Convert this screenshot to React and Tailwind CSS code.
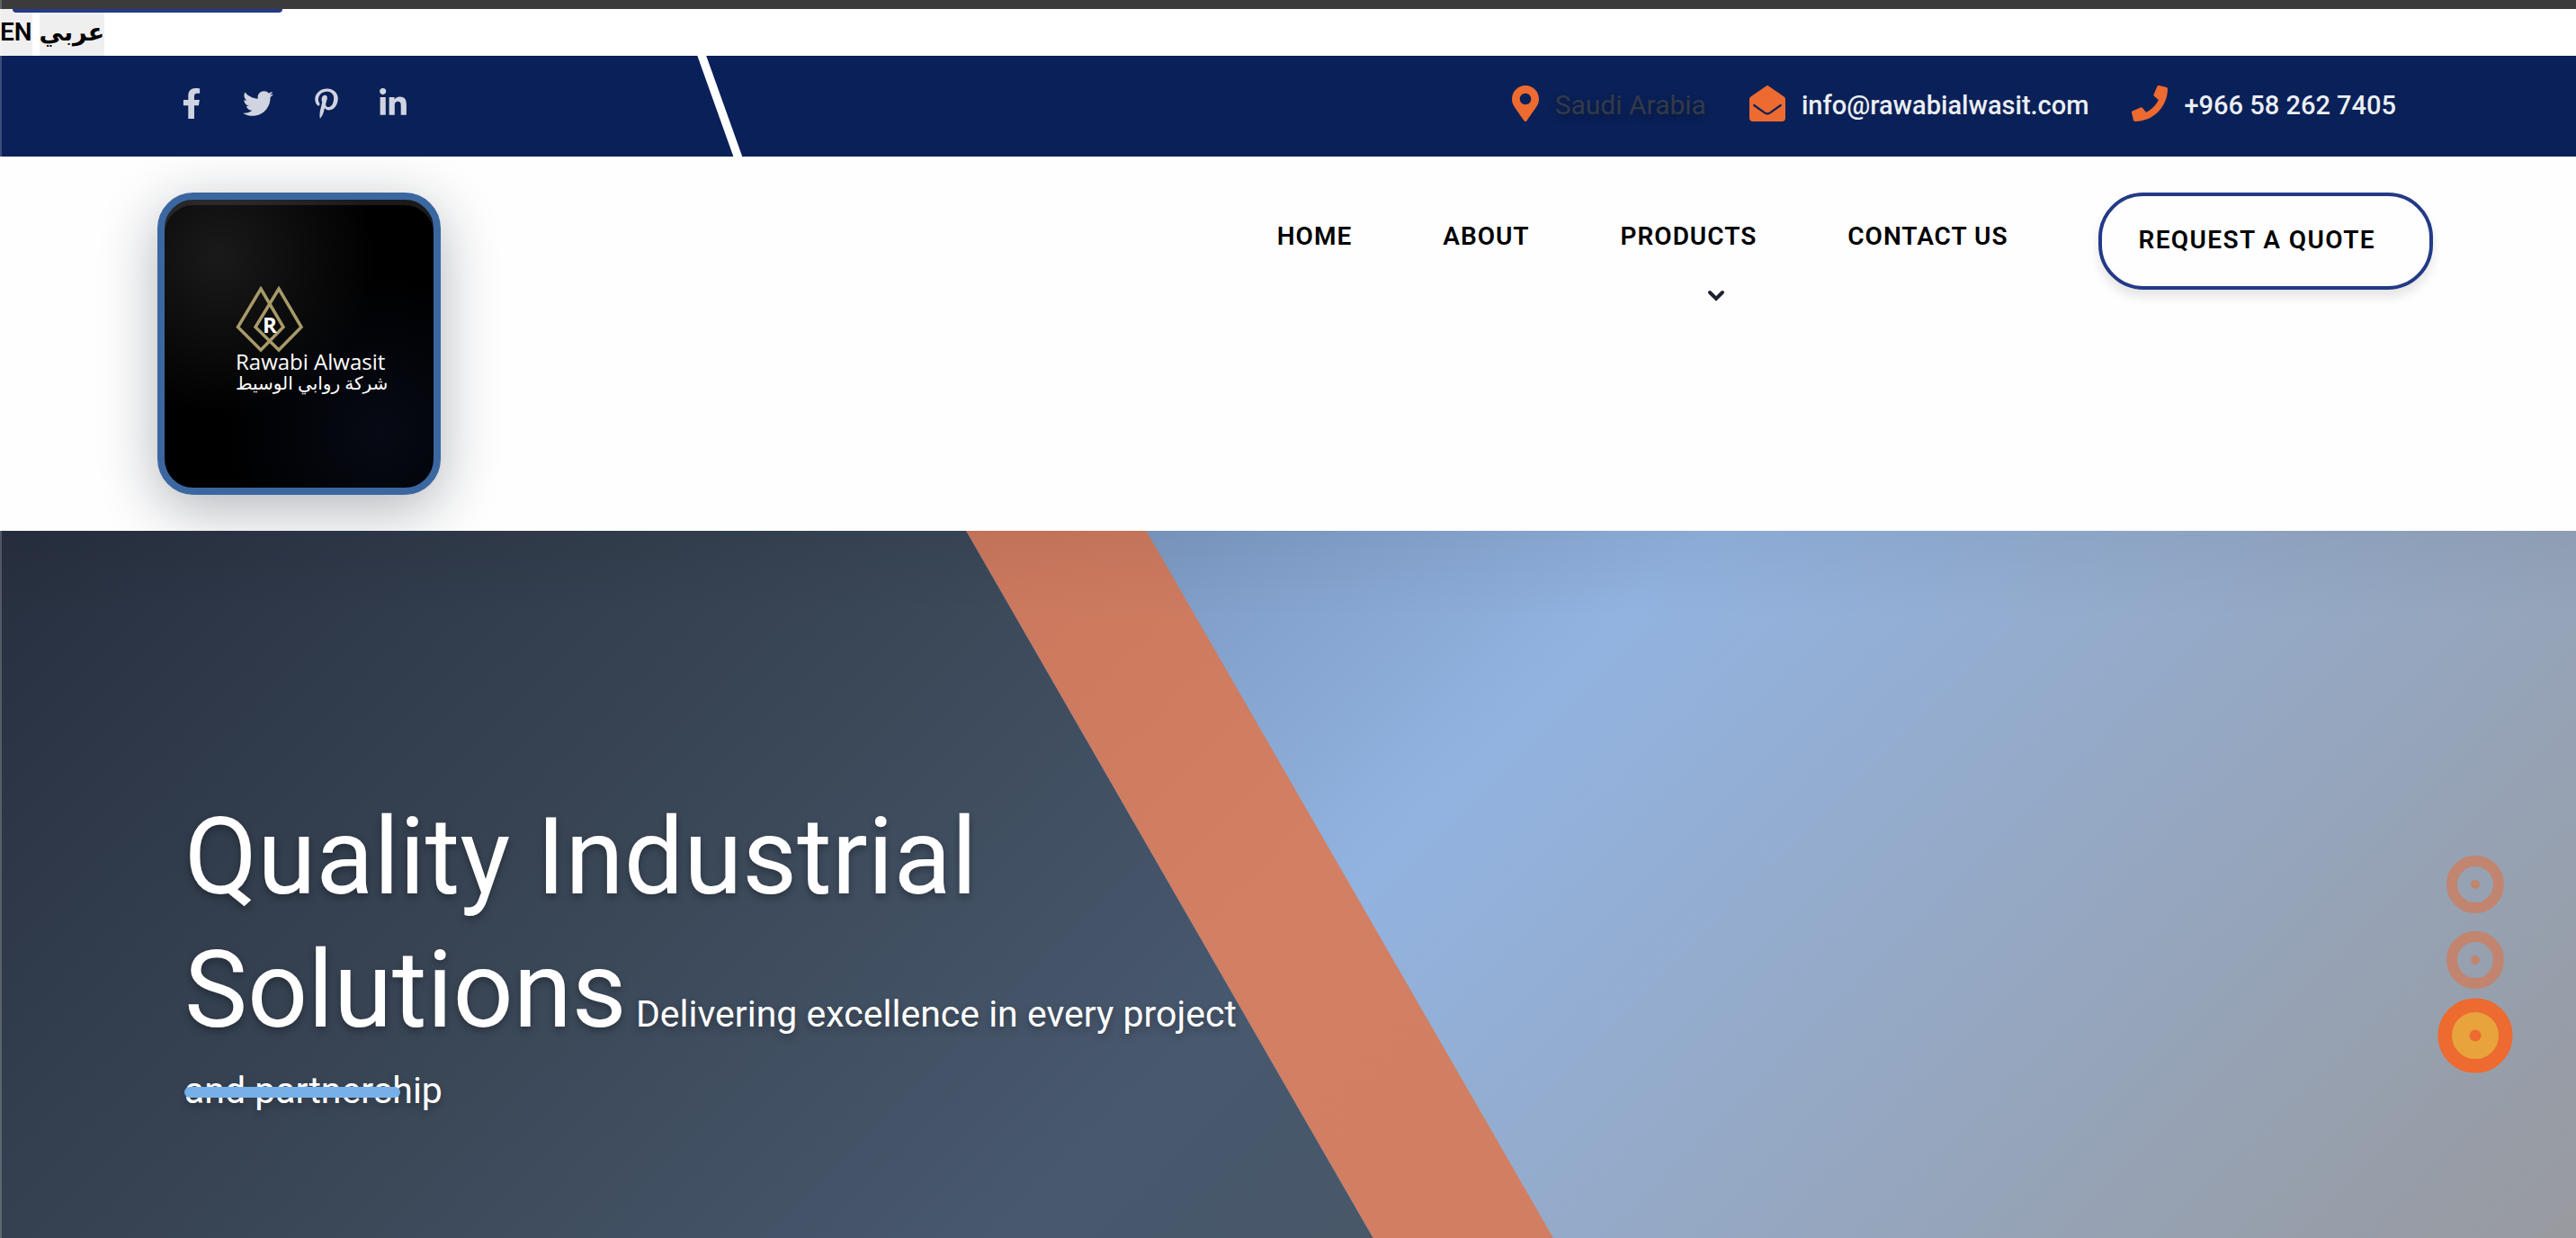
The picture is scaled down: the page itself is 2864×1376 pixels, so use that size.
import React from "react";
import {
  FaFacebookF,
  FaTwitter,
  FaPinterestP,
  FaLinkedinIn,
  FaMapMarkerAlt,
  FaPhone,
} from "react-icons/fa";

const socials = [
  { label: "Facebook", Icon: FaFacebookF, size: "h-[34px] w-[22px]" },
  { label: "Twitter", Icon: FaTwitter, size: "h-[34px] w-[34px]" },
  { label: "Pinterest", Icon: FaPinterestP, size: "h-[34px] w-[26px]" },
  { label: "LinkedIn", Icon: FaLinkedinIn, size: "h-[34px] w-[30px]" },
];

function LanguageBar() {
  return (
    <div className="flex h-[52px] gap-2 bg-white text-[28px] text-black">
      <button type="button" className="bg-[#efefef] font-semibold">EN</button>
      <button type="button" lang="ar" className="bg-[#efefef] text-[27px] font-bold">عربي</button>
    </div>
  );
}

function EnvelopeIcon() {
  return (
    <svg viewBox="0 0 40 40" className="size-10" aria-hidden="true">
      <path
        d="M18.500 0.700 Q20 -0.500 21.500 0.700 L38.600 12.600 Q40 13.800 40 15.500 V36 Q40 40 36 40 H4 Q0 40 0 36 V15.500 Q0 13.800 1.400 12.600 Z"
        fill="#ed6a30"
      />
      <path
        d="M5.200 22 L17 30.300 Q20 32.300 23 30.300 L34.800 22"
        fill="none"
        stroke="#0a2058"
        strokeWidth="2.200"
        strokeLinecap="round"
      />
    </svg>
  );
}

function TopBar() {
  return (
    <div className="relative z-10 flex h-28 items-center justify-between bg-[#0a2058] pr-[200px] pb-1.5 pl-[202px]">
      <div className="absolute inset-y-0 left-[27%] w-[52px] bg-white [clip-path:polygon(4%_0,23%_0,100%_100%,81%_100%)]" />
      <ul className="flex items-center gap-[46px] text-[#d0d4e0]">
        {socials.map(({ label, Icon, size }) => (
          <li key={label}>
            <a href="#" aria-label={label} className="block">
              <Icon className={size} />
            </a>
          </li>
        ))}
      </ul>
      <ul className="flex items-center gap-12 text-[29px] leading-10 text-[#ebeef2]">
        <li className="flex items-center gap-[18px] text-[#333a48]">
          <FaMapMarkerAlt className="h-10 w-[30px] text-[#ed6a30]" />
          <span className="pt-1 text-[30px] [text-shadow:0_4px_8px_rgba(0,0,0,0.3)]">Saudi Arabia</span>
        </li>
        <li className="flex items-center gap-[18px]">
          <EnvelopeIcon />
          <a href="mailto:info@rawabialwasit.com" className="pt-1 font-medium">info@rawabialwasit.com</a>
        </li>
        <li className="flex items-center gap-[18px]">
          <FaPhone className="size-10 text-[#ed6a30]" />
          <a href="tel:+966582627405" className="pt-1 font-medium">+966 58 262 7405</a>
        </li>
      </ul>
    </div>
  );
}

function Logo() {
  return (
    <a
      href="#"
      className="flex h-[336px] w-[315px] flex-col items-start justify-center rounded-[40px] border-8 border-[#3b67a1] bg-black bg-[radial-gradient(circle_at_20%_20%,#1a1a1a_0%,transparent_50%),radial-gradient(circle_at_80%_80%,#060a14_0%,transparent_50%)] pb-2.5 pl-[79px] text-white shadow-[0_16px_64px_rgba(17,24,39,0.32),inset_0_6px_0_rgba(255,255,255,0.1)]"
    >
      <svg viewBox="0 0 76 74" className="-mb-1 h-[74px] w-[76px]" fill="none" stroke="#a89a68" strokeWidth="3.500">
        <path d="M28 3 L53 45.500 L28 71 L2.500 45.500 Z" />
        <path d="M48 3 L73 45.500 L48 71 L22 45.500 Z" />
        <text x="38" y="52" textAnchor="middle" fill="#fff" stroke="none" className="font-['Open_Sans'] text-[24px] font-bold">R</text>
      </svg>
      <span className="font-['Open_Sans'] text-[24px] leading-7">Rawabi Alwasit</span>
      <span lang="ar" className="font-['Open_Sans','DejaVu_Sans',sans-serif] text-[20px] leading-5">شركة روابي الوسيط</span>
    </a>
  );
}

function Header() {
  return (
    <header className="flex items-start justify-between bg-[#fefefe] py-10 pr-[159px] pl-[175px]">
      <Logo />
      <nav className="flex items-start gap-[101px] text-[28px] leading-[42px] font-semibold tracking-[1px] text-black">
        <a href="#" className="pt-7">HOME</a>
        <a href="#" className="pt-7">ABOUT</a>
        <div className="flex flex-col pt-7">
          <a href="#">PRODUCTS</a>
          <button type="button" aria-label="Show products" className="mt-[38px] ml-24 w-5 text-[#1c2231]">
            <svg viewBox="0 0 20 13" className="h-[13px] w-5" fill="none" stroke="currentColor" strokeWidth="4" strokeLinecap="round">
              <path d="M3 3 L10 10 L17 3" />
            </svg>
          </button>
        </div>
        <a href="#" className="pt-7">CONTACT US</a>
        <a
          href="#"
          className="rounded-[50px] border-4 border-[#233a87] pt-7 pr-[60px] pb-[30px] pl-10 tracking-wider shadow-[0_8px_12px_rgba(0,0,0,0.1)]"
        >
          REQUEST A QUOTE
        </a>
      </nav>
    </header>
  );
}

function SlideDot({ active, label }) {
  return (
    <button
      type="button"
      aria-label={label}
      className={
        active
          ? "flex size-16 scale-130 items-center justify-center rounded-full border-12 border-[#ed6a30] bg-[#e8a33c]"
          : "flex size-16 items-center justify-center rounded-full border-12 border-[#ed6a30] opacity-50"
      }
    >
      <span className="size-2.5 rounded-full bg-[#ed6a30]" />
    </button>
  );
}

function Hero() {
  return (
    <section className="relative flex grow items-start justify-between overflow-hidden bg-[linear-gradient(135deg,#4f6488_0%,#92b3e0_52%,#989a9f_100%)] pr-20 pl-[205px]">
      <div className="absolute inset-0 bg-[linear-gradient(135deg,#bf6e55_0%,#d27f63_50%,#cf7d60_100%)] [clip-path:polygon(37.500%_0,44.500%_0,60.300%_100%,53.300%_100%)]" />
      <div className="absolute inset-0 bg-[linear-gradient(135deg,#272f3f_0%,#3b4858_31%,#48586e_52%,#485766_68%)] [clip-path:polygon(0_0,37.500%_0,53.300%_100%,0_100%)]" />
      <div className="absolute inset-x-0 top-0 h-24 bg-linear-to-b from-black/5 to-transparent" />
      <h1 className="relative mt-[289px] w-[1180px] text-[41px] leading-[74px] text-white [text-shadow:0_4px_8px_rgba(0,0,0,0.3)]">
        <span className="text-[118px] leading-[148px]">Quality Industrial Solutions</span>{" "}
        <span>Delivering excellence in every project and partnership</span>
        <span className="absolute bottom-[29px] left-0 h-3 w-60 rounded-full bg-[#77b0e8]" />
      </h1>
      <div className="relative mt-[361px] flex flex-col gap-5">
        <SlideDot label="Slide 1" />
        <SlideDot label="Slide 2" />
        <SlideDot label="Slide 3" active />
      </div>
    </section>
  );
}

export default function App() {
  return (
    <div className="relative flex min-h-screen flex-col bg-white font-[Roboto,'DejaVu_Sans',sans-serif]">
      <div className="relative h-2.5 bg-[#3b3b3b]">
        <div className="absolute top-full left-3.5 h-1 w-[300px] rounded-b-full bg-[#233a87]" />
      </div>
      <LanguageBar />
      <TopBar />
      <Header />
      <Hero />
      <div className="absolute inset-y-0 left-0 z-20 w-0.5 bg-white/20" />
    </div>
  );
}
